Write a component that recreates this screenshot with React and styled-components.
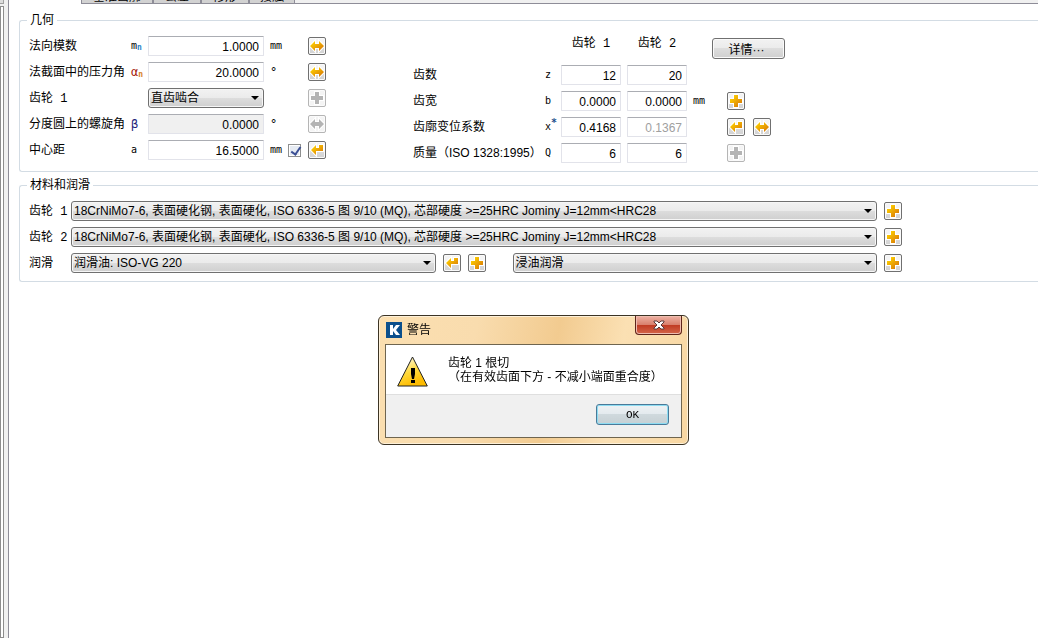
import React from "react";
import styled, { createGlobalStyle } from "styled-components";

const App = () => {
  return (
    <Container>
      <GlobalStyle />
      <SideDock>
        <DockHead />
        <DockBody />
      </SideDock>
      <Main>
        <TabBar>
          <Tab>基准齿廓</Tab>
          <Tab>公差</Tab>
          <Tab>修形</Tab>
          <Tab>接触</Tab>
        </TabBar>
        <Groups>
          <Geometry />
          <Materials />
        </Groups>
      </Main>
      <WarningDialog />
    </Container>
  );
};

export default App;

const Geometry = () => {
  return (
    <Group>
      <Legend>几何</Legend>
      <GeometryBody>
        <LeftGrid>
          <Label htmlFor="module">法向模数</Label>
          <Symbol>
            m<Sub $color="#2f86c9">n</Sub>
          </Symbol>
          <Field id="module" defaultValue="1.0000" />
          <Unit>mm</Unit>
          <span />
          <IconButton icon="swap" label="换算模数" />

          <Label htmlFor="pressure">法截面中的压力角</Label>
          <Symbol $color="#a3190c" $big>
            α<Sub $color="#d9822b">n</Sub>
          </Symbol>
          <Field id="pressure" defaultValue="20.0000" />
          <Unit $big>°</Unit>
          <span />
          <IconButton icon="swap" label="换算压力角" />

          <GearLabel htmlFor="mesh">齿轮 1</GearLabel>
          <span />
          <SelectBox id="mesh" text="直齿啮合" />
          <span />
          <span />
          <IconButton icon="plus" label="螺旋方向" disabled />

          <Label htmlFor="helix">分度圆上的螺旋角</Label>
          <Symbol $color="#1d1f7a" $big>
            β
          </Symbol>
          <Field id="helix" defaultValue="0.0000" readOnly $shaded />
          <Unit $big>°</Unit>
          <span />
          <IconButton icon="swap" label="换算螺旋角" disabled />

          <Label htmlFor="distance">中心距</Label>
          <Symbol>a</Symbol>
          <Field id="distance" defaultValue="16.5000" />
          <Unit>mm</Unit>
          <Check type="checkbox" aria-label="固定中心距" defaultChecked />
          <IconButton icon="enter" label="计算中心距" />
        </LeftGrid>

        <RightGrid>
          <span />
          <span />
          <ColumnHead>齿轮 1</ColumnHead>
          <ColumnHead>齿轮 2</ColumnHead>
          <span />
          <Actions>
            <DetailButton type="button">详情···</DetailButton>
          </Actions>

          <Label htmlFor="z1">齿数</Label>
          <Symbol>z</Symbol>
          <Field id="z1" defaultValue="12" />
          <Field aria-label="齿数 2" defaultValue="20" />
          <span />
          <span />

          <Label htmlFor="b1">齿宽</Label>
          <Symbol>b</Symbol>
          <Field id="b1" defaultValue="0.0000" />
          <Field aria-label="齿宽 2" defaultValue="0.0000" />
          <Unit>mm</Unit>
          <Actions $indent>
            <IconButton icon="plus" label="齿宽详情" />
          </Actions>

          <Label htmlFor="x1">齿廓变位系数</Label>
          <Symbol>
            x<Star>*</Star>
          </Symbol>
          <Field id="x1" defaultValue="0.4168" />
          <Field aria-label="齿廓变位系数 2" defaultValue="0.1367" readOnly $dim />
          <span />
          <Actions $indent>
            <IconButton icon="enter" label="计算变位系数" />
            <IconButton icon="swap" label="换算变位系数" />
          </Actions>

          <Label htmlFor="q1">质量（ISO 1328:1995）</Label>
          <Symbol>Q</Symbol>
          <Field id="q1" defaultValue="6" />
          <Field aria-label="质量 2" defaultValue="6" />
          <span />
          <Actions $indent>
            <IconButton icon="plus" label="质量详情" disabled />
          </Actions>
        </RightGrid>
      </GeometryBody>
    </Group>
  );
};

const steel =
  "18CrNiMo7-6, 表面硬化钢, 表面硬化, ISO 6336-5 图 9/10 (MQ), 芯部硬度 >=25HRC Jominy J=12mm<HRC28";

const Materials = () => {
  return (
    <Group>
      <Legend>材料和润滑</Legend>
      <MaterialBody>
        <MaterialRow>
          <GearLabel htmlFor="steel1">齿轮 1</GearLabel>
          <SelectBox id="steel1" text={steel} />
          <IconButton icon="plus" label="齿轮 1 材料" />
        </MaterialRow>
        <MaterialRow>
          <GearLabel htmlFor="steel2">齿轮 2</GearLabel>
          <SelectBox id="steel2" text={steel} />
          <IconButton icon="plus" label="齿轮 2 材料" />
        </MaterialRow>
        <MaterialRow>
          <Label htmlFor="oil">润滑</Label>
          <SelectBox id="oil" text="润滑油: ISO-VG 220" />
          <IconButton icon="enter" label="选择润滑油" />
          <IconButton icon="plus" label="润滑油详情" />
          <Spacer />
          <SelectBox label="润滑方式" text="浸油润滑" />
          <IconButton icon="plus" label="润滑方式详情" />
        </MaterialRow>
      </MaterialBody>
    </Group>
  );
};

const WarningDialog = () => {
  return (
    <Dialog role="alertdialog" aria-labelledby="dialog-title">
      <TitleBar>
        <Logo viewBox="0 0 16 16" aria-hidden="true">
          <rect width="16" height="16" fill="#0b4f8c" />
          <path d="M4 3h3v4l3-4h4l-4 5 4 5h-4L7 9v4H4z" fill="#fff" />
        </Logo>
        <Title id="dialog-title">警告</Title>
        <CloseButton type="button" aria-label="关闭">
          <svg width="12" height="10" viewBox="0 0 12 10">
            <path
              d="M1 1h3l2 2 2-2h3v1L8 5l3 3v1H8L6 7 4 9H1V8l3-3-3-3z"
              fill="#fff"
              stroke="#5b3a3a"
              strokeWidth="1"
            />
          </svg>
        </CloseButton>
      </TitleBar>
      <DialogFrame>
        <Message>
          <WarningSign viewBox="0 0 31 31" aria-hidden="true">
            <defs>
              <linearGradient id="warn" x1="0" y1="0" x2="0.4" y2="1">
                <stop offset="0.1" stopColor="#fffbe0" />
                <stop offset="0.6" stopColor="#ffd83a" />
                <stop offset="1" stopColor="#fdbb00" />
              </linearGradient>
            </defs>
            <path d="M15.5 1L30.3 30H.7z" fill="url(#warn)" stroke="#222" strokeWidth="1" />
            <path d="M14 12h4v6l-1 5h-2l-1-5zM14 24h4v3h-4z" fill="#000" />
          </WarningSign>
          <MessageText>
            齿轮 1 根切
            <br />
            （在有效齿面下方 - 不减小端面重合度）
          </MessageText>
        </Message>
        <Footer>
          <OkButton type="button">OK</OkButton>
        </Footer>
      </DialogFrame>
    </Dialog>
  );
};

const icons = {
  swap: "M1 8l5-5v3h4V3l5 5-5 5v-3H6v3z",
  plus: "M6 2h4v4h4v4h-4v4H6v-4H2V6h4z",
  enter: "M2 8l5-5v3h3V3h4v6H7v4z",
};

const IconButton = ({ icon, label, disabled }) => {
  return (
    <SmallButton type="button" aria-label={label} disabled={disabled}>
      <svg width="16" height="16" viewBox="0 0 16 16">
        <defs>
          <linearGradient id="gold" x1="0" y1="0" x2="1" y2="1">
            <stop offset="0.1" stopColor="#ffd400" />
            <stop offset="0.9" stopColor="#d97a08" />
          </linearGradient>
        </defs>
        <path d={icons[icon]} fill="#fff" stroke="#fff" strokeWidth="2" />
        <path d={icons[icon]} fill={disabled ? "#b4b4b4" : "url(#gold)"} />
      </svg>
    </SmallButton>
  );
};

const SelectBox = ({ id, text, label }) => {
  return (
    <SelectWrap>
      <Select id={id} aria-label={label}>
        <option>{text}</option>
      </Select>
      <Arrow viewBox="0 0 8 4" aria-hidden="true">
        <path d="M0 0h8L4 4z" fill="#000" />
      </Arrow>
    </SelectWrap>
  );
};

const GlobalStyle = createGlobalStyle`
  * {
    box-sizing: border-box;
  }
  body {
    margin: 0;
    background-color: #fff;
  }
  body, button, input, select {
    font-family: "Liberation Sans", "Noto Sans CJK SC", sans-serif;
    font-size: 12px;
    color: #000;
  }
`;

const Container = styled.div`
  display: flex;
  min-height: 100vh;
  overflow: hidden;
`;

const SideDock = styled.div`
  width: 9px;
  display: flex;
  flex-direction: column;
  gap: 2px;
  background-color: #f0f0f0;
  border-right: 1px solid #8e8d98;
`;

const DockHead = styled.div`
  width: 4px;
  height: 4px;
  background-color: #dcdcdc;
  border-right: 1px solid #a0a0a0;
  border-bottom: 1px solid #a0a0a0;
`;

const DockBody = styled.div`
  width: 4px;
  flex: 1;
  background-color: #fff;
  border: 1px solid #8c8c8c;
`;

const Main = styled.main`
  flex: 1;
  min-width: 0;
`;

const TabBar = styled.div`
  height: 4px;
  margin-left: 72px;
  display: flex;
  align-items: flex-end;
  overflow: hidden;
  background-color: #f0f0f0;
  border-bottom: 1px solid #8e8d98;
`;

const Tab = styled.div`
  padding: 0 11px;
  line-height: 12px;
  background-color: #d2d2d2;
  border-right: 2px solid #8e8d98;

  &:first-child {
    border-left: 1px solid #8e8d98;
  }

  &:last-child {
    padding: 0 10px;
    border-right-width: 1px;
  }
`;

const Groups = styled.div`
  display: flex;
  flex-direction: column;
  gap: 5px;
  padding: 8px 0 0 10px;
`;

const Group = styled.fieldset`
  min-width: 0;
  margin: 0;
  padding: 0 0 0 9px;
  border: 1px solid #d3dce4;
  border-right: none;
  border-radius: 3px 0 0 3px;
`;

const Legend = styled.legend`
  margin-left: -2px;
  padding: 0 3px;
  line-height: 16px;
`;

const GeometryBody = styled.div`
  display: flex;
  gap: 87px;
  padding: 8px 0;
`;

const LeftGrid = styled.div`
  display: grid;
  grid-template-columns: 96px 11px 116px 12px 14px 18px;
  grid-auto-rows: 20px;
  gap: 6px;
  align-items: center;
`;

const RightGrid = styled.div`
  display: grid;
  grid-template-columns: 126px 10px 60px 60px 13px 74px;
  grid-template-rows: 22px;
  grid-auto-rows: 20px;
  gap: 6px;
  align-items: center;
  padding-top: 1px;
`;

const Label = styled.label`
  line-height: 18px;
  white-space: nowrap;
`;

const GearLabel = styled(Label)`
  padding-top: 2px;
  font-family: "Liberation Mono", "Noto Sans CJK SC", monospace;
`;

const Symbol = styled.span`
  font-family: "DejaVu Sans Mono", monospace;
  font-size: ${(props) => (props.$big ? "12px" : "10px")};
  line-height: 18px;
  color: ${(props) => props.$color || "#000"};
  white-space: nowrap;
`;

const Sub = styled.sub`
  font-size: 8px;
  font-weight: 700;
  line-height: 8px;
  vertical-align: -1px;
  color: ${(props) => props.$color};
`;

const Star = styled.sup`
  font-size: 10px;
  font-weight: 700;
  line-height: 8px;
  color: #1c4f8c;
`;

const Unit = styled.span`
  font-family: "DejaVu Sans Mono", monospace;
  font-size: ${(props) => (props.$big ? "12px" : "10px")};
  line-height: 18px;
`;

const Field = styled.input`
  width: 100%;
  height: 20px;
  padding: 1px 4px 0;
  text-align: right;
  color: ${(props) => (props.$dim ? "#a0a0a0" : "#000")};
  background-color: ${(props) => (props.$shaded ? "#f0f0f0" : "#fff")};
  border: 1px solid #e2e3ea;
  border-top-color: #abadb3;
  border-radius: 1px;
  outline: none;
`;

const Check = styled.input`
  appearance: none;
  width: 13px;
  height: 13px;
  margin: 0;
  background-color: #e6ebf3;
  border: 1px solid #8e8f8f;
  box-shadow: inset 0 0 0 1px #fff;

  &:checked::after {
    content: "";
    display: block;
    width: 4px;
    height: 8px;
    margin: 0 0 0 4px;
    border: solid #3b4f94;
    border-width: 0 2px 2px 0;
    transform: rotate(35deg);
  }
`;

const ColumnHead = styled.span`
  align-self: start;
  text-align: center;
  line-height: 14px;
  font-family: "Liberation Mono", "Noto Sans CJK SC", monospace;
`;

const Actions = styled.div`
  display: flex;
  gap: 8px;
  padding-left: ${(props) => (props.$indent ? "15px" : "0")};
`;

const SmallButton = styled.button`
  flex: none;
  width: 18px;
  height: 18px;
  padding: 0;
  display: flex;
  justify-content: center;
  align-items: center;
  background: linear-gradient(#f4f4f4 50%, #dcdcdc 50%, #d2d2d2);
  border: 1px solid #707070;
  border-radius: 2px;
  box-shadow: inset 0 0 0 1px #fafafa;

  &:disabled {
    background: #f4f4f4;
    border-color: #b5b5b5;
  }
`;

const DetailButton = styled.button`
  width: 73px;
  height: 21px;
  padding: 0 4px 0 0;
  background: linear-gradient(#f2f2f2, #ebebeb 48%, #dddddd 50%, #cfcfcf);
  border: 1px solid #707070;
  border-radius: 3px;
  box-shadow: inset 0 0 0 1px #fafafa;
`;

const SelectWrap = styled.div`
  flex: 1;
  min-width: 0;
  display: grid;
  align-items: center;
`;

const Select = styled.select`
  grid-area: 1 / 1;
  appearance: none;
  width: 100%;
  height: 20px;
  padding: 0 18px 0 2px;
  background: linear-gradient(#f2f2f2, #ebebeb 48%, #dddddd 50%, #cfcfcf);
  border: 1px solid #707070;
  border-radius: 3px;
  box-shadow: inset 0 0 0 1px #f6f6f6;
`;

const Arrow = styled.svg`
  grid-area: 1 / 1;
  justify-self: end;
  width: 8px;
  height: 4px;
  margin-right: 5px;
  pointer-events: none;
`;

const MaterialBody = styled.div`
  display: flex;
  flex-direction: column;
  gap: 6px;
  padding: 8px 136px 8px 0;
`;

const MaterialRow = styled.div`
  display: flex;
  align-items: center;
  gap: 7px;

  > label {
    width: 35px;
  }
`;

const Spacer = styled.span`
  width: 13px;
`;

const Dialog = styled.div`
  position: fixed;
  top: 315px;
  left: 378px;
  width: 311px;
  padding: 0 6px 6px;
  background: linear-gradient(100deg, #fbdfb0, #f9dcae 30%, #f2cb90 55%, #fbe0b3 75%, #f8d7a2);
  border: 1px solid #3c3425;
  border-radius: 6px;
  box-shadow: inset 0 0 0 1px #fdf0d8;
`;

const TitleBar = styled.div`
  height: 28px;
  display: flex;
  align-items: center;
  gap: 5px;
`;

const Logo = styled.svg`
  width: 16px;
  height: 16px;
  margin-left: 1px;
`;

const Title = styled.span`
  flex: 1;
  line-height: 18px;
`;

const CloseButton = styled.button`
  align-self: flex-start;
  width: 47px;
  height: 19px;
  padding: 0;
  display: flex;
  justify-content: center;
  align-items: center;
  background: linear-gradient(#eeb2a4, #d9806d 48%, #c03a22 50%, #d4664a);
  border: 1px solid #5e241a;
  border-top: none;
  border-radius: 0 0 4px 4px;
  box-shadow: inset 0 0 0 1px #eebdb0;
`;

const DialogFrame = styled.div`
  border: 1px solid #6f654f;
  background-color: #f0f0f0;
`;

const Message = styled.div`
  display: flex;
  gap: 20px;
  padding: 11px 10px 7px 11px;
  background-color: #fff;
  border-bottom: 1px solid #dfdfdf;
`;

const WarningSign = styled.svg`
  flex: none;
  width: 31px;
  height: 31px;
`;

const MessageText = styled.p`
  margin: 0;
  line-height: 14px;
  white-space: nowrap;
`;

const Footer = styled.div`
  display: flex;
  justify-content: flex-end;
  padding: 9px 12px 12px;
`;

const OkButton = styled.button`
  width: 73px;
  height: 21px;
  padding: 0;
  font-family: "Liberation Mono", monospace;
  font-size: 11px;
  background: linear-gradient(#eef2f4, #e3eaee 48%, #cfd9dd 50%, #c6d0d4);
  border: 1px solid #4a7a99;
  border-radius: 3px;
  box-shadow: inset 0 0 0 1px #8ddcf2;
`;
